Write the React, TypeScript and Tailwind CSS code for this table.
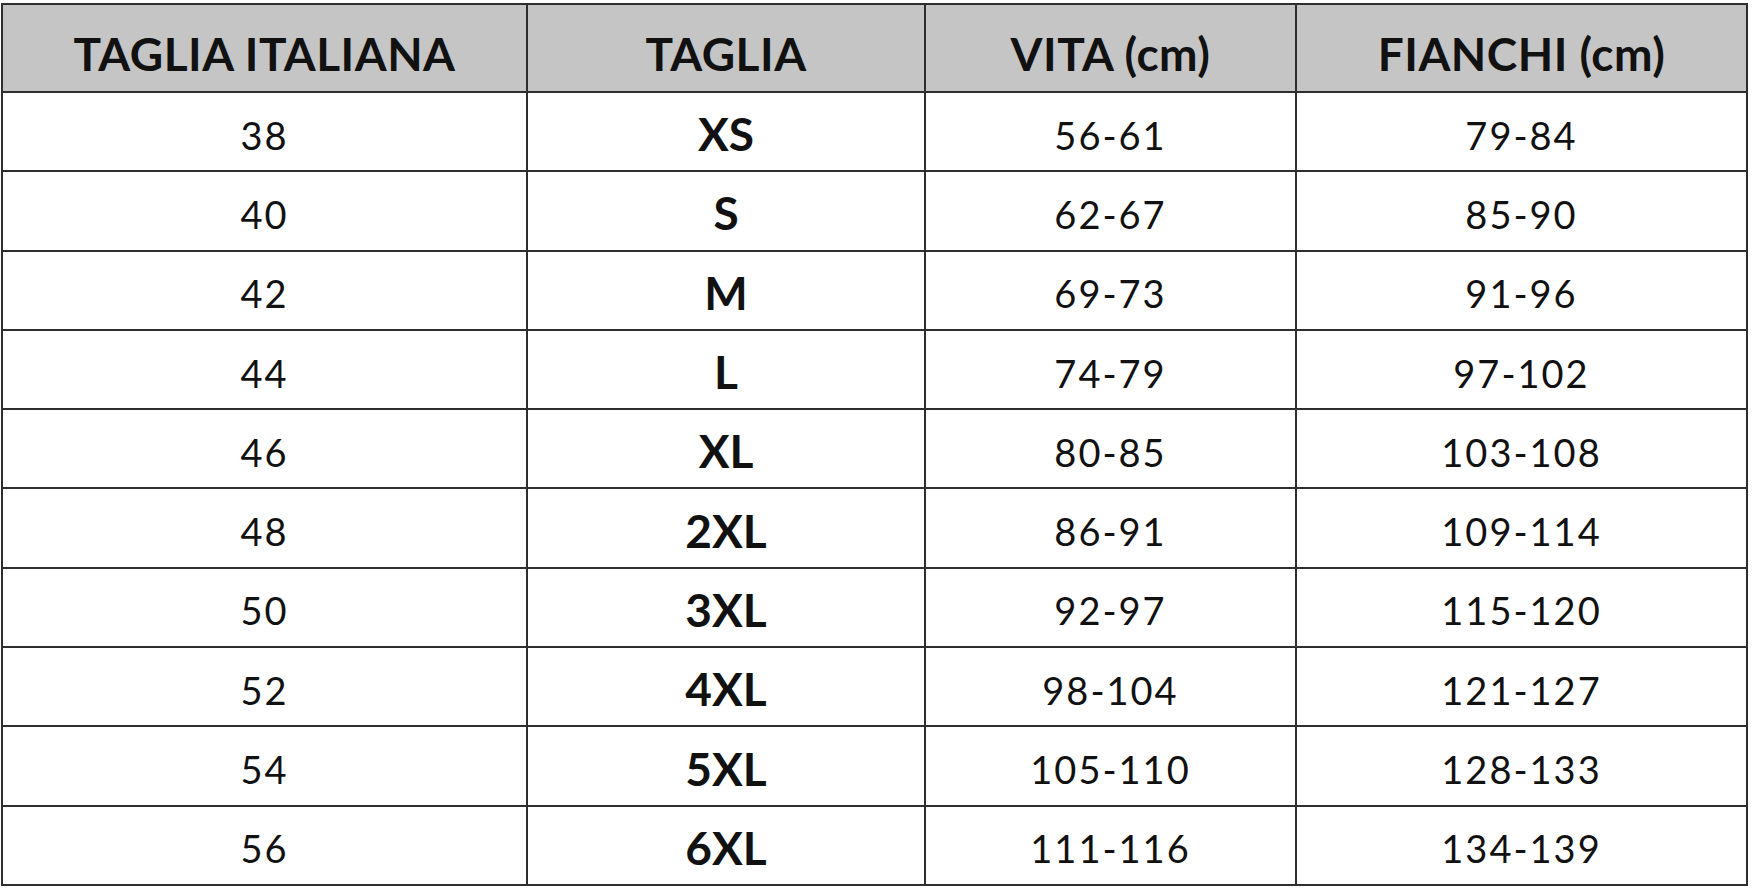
const rows = [
  ["38", "XS", "56-61", "79-84"],
  ["40", "S", "62-67", "85-90"],
  ["42", "M", "69-73", "91-96"],
  ["44", "L", "74-79", "97-102"],
  ["46", "XL", "80-85", "103-108"],
  ["48", "2XL", "86-91", "109-114"],
  ["50", "3XL", "92-97", "115-120"],
  ["52", "4XL", "98-104", "121-127"],
  ["54", "5XL", "105-110", "128-133"],
  ["56", "6XL", "111-116", "134-139"],
];

const headers = ["TAGLIA ITALIANA", "TAGLIA", "VITA (cm)", "FIANCHI (cm)"];

export default function App() {
  return (
    <div className="min-h-[896px] w-[1754px] bg-white pl-[1px] pt-[3px] font-['Lato',sans-serif] text-[#111]">
      <table className="w-[1747px] table-fixed border-collapse border-2 border-[#2e2e2e]">
        <colgroup>
          <col className="w-[525px]" />
          <col className="w-[398px]" />
          <col className="w-[371px]" />
          <col className="w-[451px]" />
        </colgroup>
        <thead>
          <tr className="h-[88px] bg-[#c5c5c5]">
            {headers.map((h) => (
              <th
                key={h}
                className="border-2 border-[#2e2e2e] pt-[12px] text-center align-middle text-[46px] font-bold leading-none tracking-[0.5px]"
              >
                {h}
              </th>
            ))}
          </tr>
        </thead>
        <tbody>
          {rows.map((r) => (
            <tr key={r[0]} className="h-[79.3px]">
              <td className="border-2 border-[#2e2e2e] pt-[6px] text-center text-[38px] leading-none tracking-[2px]">{r[0]}</td>
              <td className="border-2 border-[#2e2e2e] pt-[5px] text-center text-[46px] font-bold leading-none">{r[1]}</td>
              <td className="border-2 border-[#2e2e2e] pt-[6px] text-center text-[38px] leading-none tracking-[2px]">{r[2]}</td>
              <td className="border-2 border-[#2e2e2e] pt-[6px] text-center text-[38px] leading-none tracking-[2px]">{r[3]}</td>
            </tr>
          ))}
        </tbody>
      </table>
    </div>
  );
}
